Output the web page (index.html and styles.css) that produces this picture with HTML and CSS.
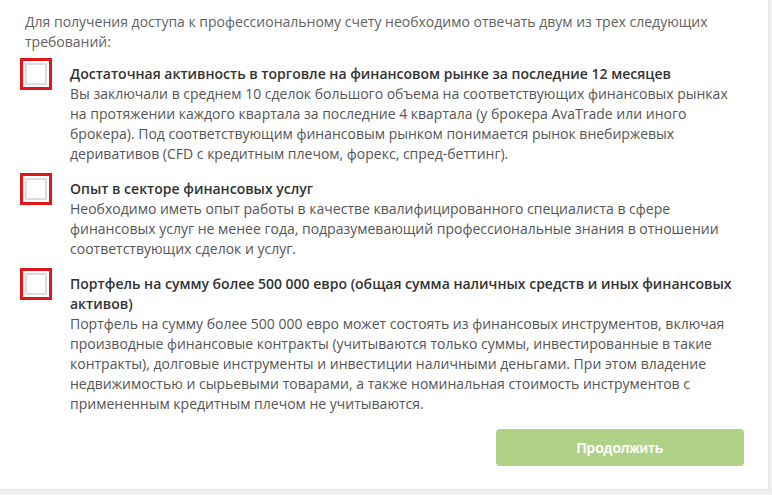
FILE: index.html
```html
<!DOCTYPE html>
<html lang="ru">
<head>
<meta charset="utf-8">
<link rel="stylesheet" href="styles.css">
</head>
<body>
<div class="card">
  <p class="intro">Для получения доступа к профессиональному счету необходимо отвечать двум из трех следующих требований:</p>
  <div class="item">
    <span class="check"></span>
    <div class="text">
      <div class="title">Достаточная активность в торговле на финансовом рынке за последние 12 месяцев</div>
      <div class="desc">Вы заключали в среднем 10 сделок большого объема на соответствующих финансовых рынках на протяжении каждого квартала за последние 4 квартала (у брокера AvaTrade или иного брокера). Под соответствующим финансовым рынком понимается рынок внебиржевых деривативов (CFD с кредитным плечом, форекс, спред-беттинг).</div>
    </div>
  </div>
  <div class="item">
    <span class="check"></span>
    <div class="text">
      <div class="title">Опыт в секторе финансовых услуг</div>
      <div class="desc">Необходимо иметь опыт работы в качестве квалифицированного специалиста в сфере финансовых услуг не менее года, подразумевающий профессиональные знания в отношении соответствующих сделок и услуг.</div>
    </div>
  </div>
  <div class="item">
    <span class="check"></span>
    <div class="text">
      <div class="title">Портфель на сумму более 500 000 евро (общая сумма наличных средств и иных финансовых активов)</div>
      <div class="desc">Портфель на сумму более 500 000 евро может состоять из финансовых инструментов, включая производные финансовые контракты (учитываются только суммы, инвестированные в такие контракты), долговые инструменты и инвестиции наличными деньгами. При этом владение недвижимостью и сырьевыми товарами, а также номинальная стоимость инструментов с примененным кредитным плечом не учитываются.</div>
    </div>
  </div>
  <div class="actions">
    <button class="btn">Продолжить</button>
  </div>
</div>
</body>
</html>
```
FILE: styles.css
```css
html, body {
  margin: 0;
  padding: 0;
}
body {
  background: #eef0f0;
  font-family: "Open Sans", "DejaVu Sans", sans-serif;
  font-size: 14px;
  line-height: 20px;
  color: #555;
}
.card {
  width: 769px;
  box-sizing: border-box;
  height: 490px;
  background: #fff;
  border-bottom: 1px solid #dfe2e2;
  border-right: 1px solid #e6e8e8;
  padding: 12px 24px 0 25px;
}
.intro {
  margin: 0 0 12px 0;
  color: #626262;
}
.item {
  display: flex;
  align-items: flex-start;
  gap: 23px;
  margin-bottom: 15px;
}
.check {
  flex: 0 0 auto;
  width: 22px;
  height: 22px;
  box-sizing: border-box;
  border: 2px solid #dcdcdc;
  background: #fff;
  outline: 3px solid #e0161d;
  outline-offset: 2px;
  margin-top: -1px;
}
.text {
  flex: 1 1 auto;
}
.title {
  font-weight: 600;
  color: #333;
}
.desc {
  color: #555;
}
.actions {
  display: flex;
  justify-content: flex-end;
}
.btn {
  width: 248px;
  height: 37px;
  border: none;
  border-radius: 4px;
  background: #afd287;
  color: #fff;
  font-family: "Liberation Sans", Arial, sans-serif;
  font-weight: bold;
  font-size: 14px;
}
```
